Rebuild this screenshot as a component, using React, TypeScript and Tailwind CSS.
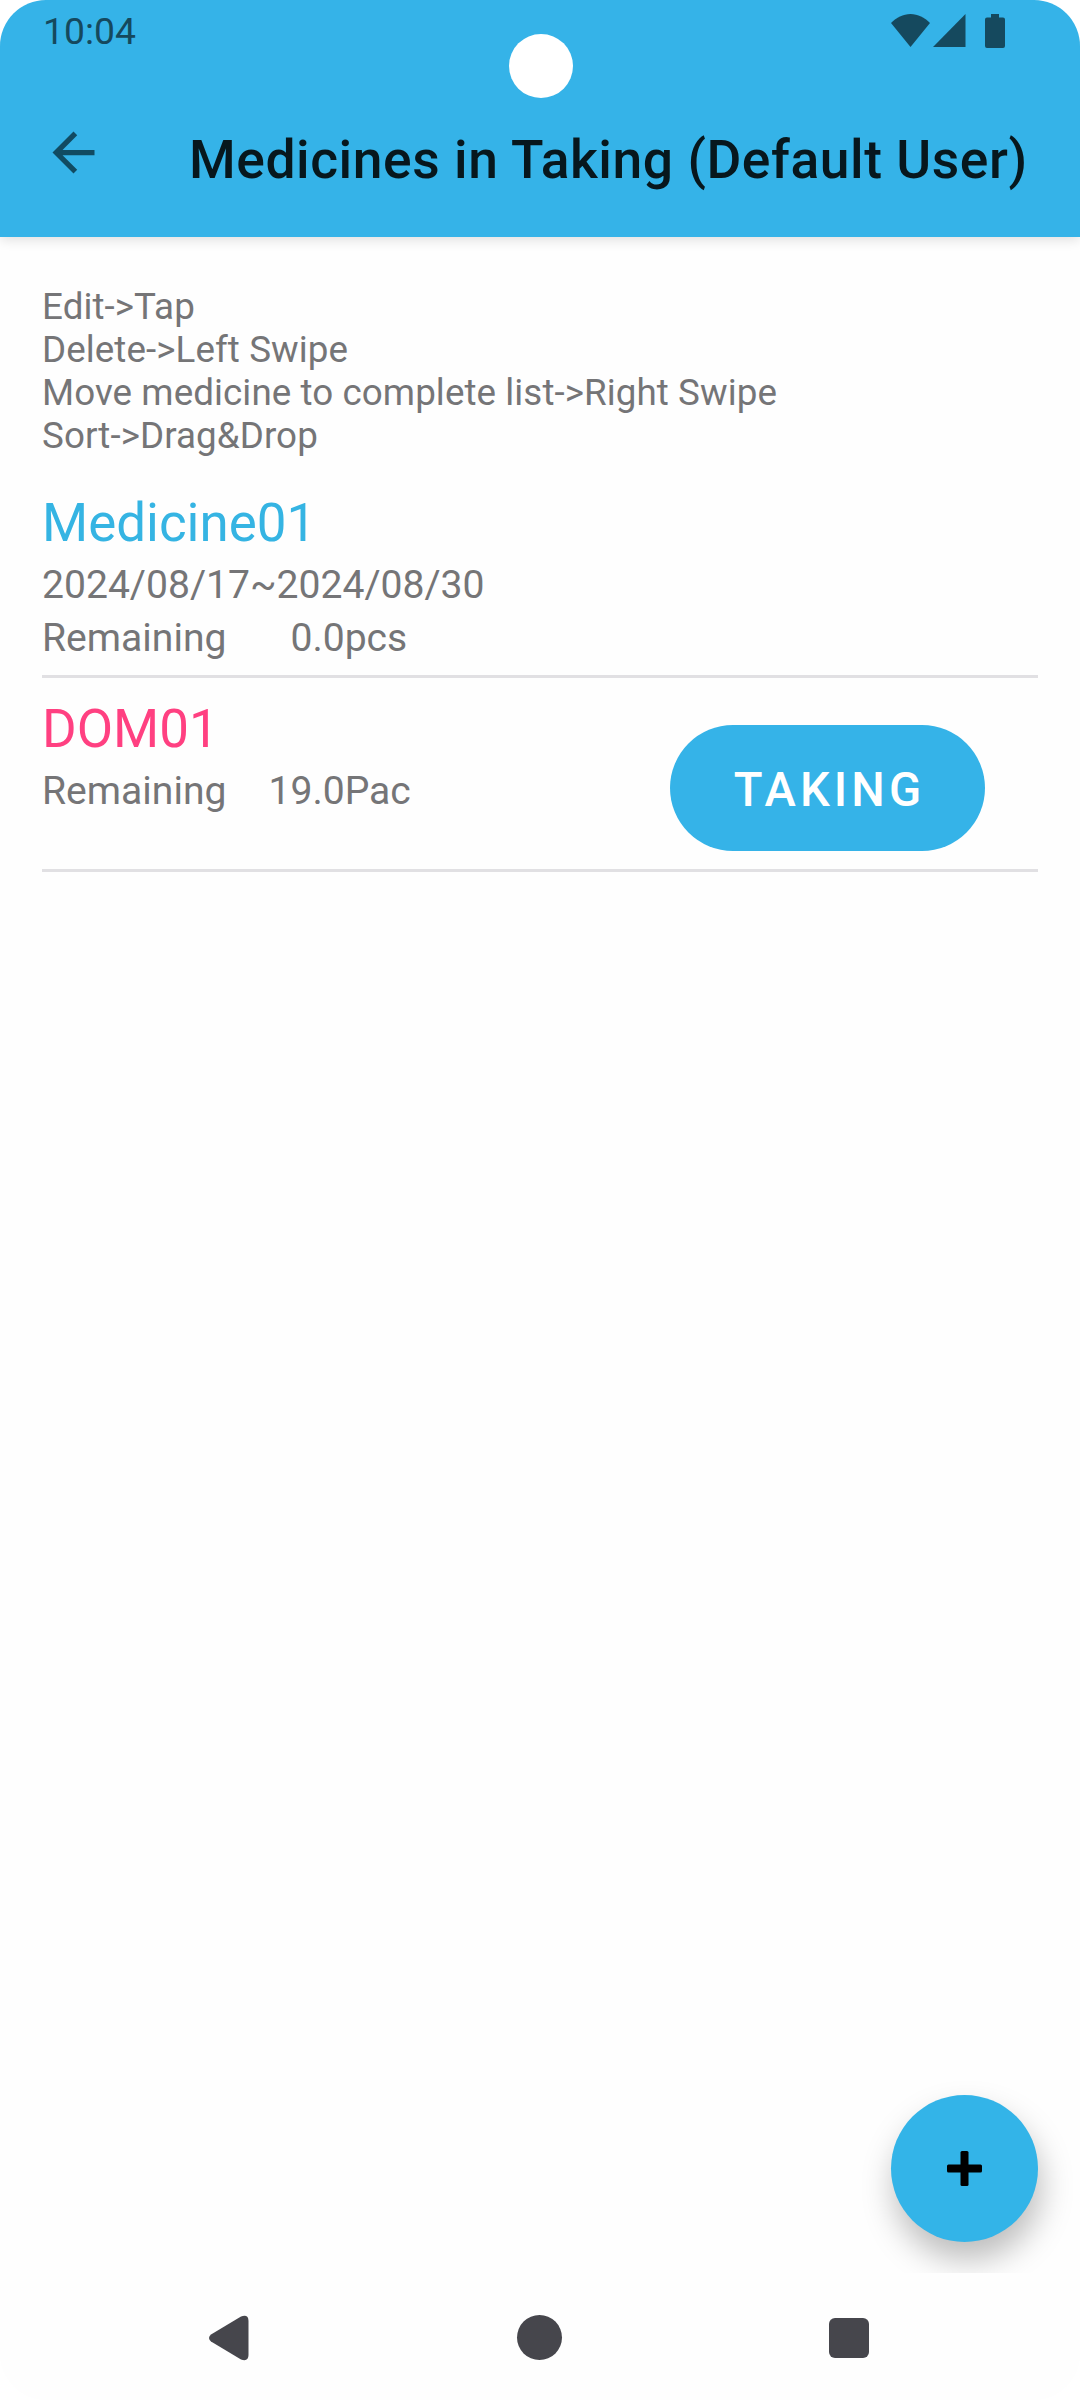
import type { ReactNode } from 'react';

type Medicine = {
  name: string;
  color: string;
  period?: string;
  amount: string;
  amountOffset: string;
  size: string;
  canTake?: boolean;
};

type MedicineRowProps = {
  medicine: Medicine;
};

type HeaderProps = {
  children: ReactNode;
};

const hints = [
  'Edit->Tap',
  'Delete->Left Swipe',
  'Move medicine to complete list->Right Swipe',
  'Sort->Drag&Drop',
];

const medicines: Medicine[] = [
  {
    name: 'Medicine01',
    color: 'text-[#35b4e3]',
    period: '2024/08/17~2024/08/30',
    amount: '0.0pcs',
    amountOffset: 'pl-[64px]',
    size: 'h-[206px]',
  },
  {
    name: 'DOM01',
    color: 'text-[#ff4081]',
    amount: '19.0Pac',
    amountOffset: 'pl-[42px]',
    size: 'h-[194px]',
    canTake: true,
  },
];

function StatusBar() {
  return (
    <div className="flex h-[63px] items-start justify-between pl-[43px] pr-[75px] text-[#15495e]">
      <span className="pt-[10px] text-[37.3px] leading-[43px]">10:04</span>
      <div className="flex pt-[14px]">
        <svg width="39" height="33" viewBox="0 0 39 33" fill="currentColor">
          <path d="M19.5 33 0 9C5.500 3.500 12 0 19.500 0S33.500 3.500 39 9Z" />
        </svg>
        <svg width="33" height="33" viewBox="0 0 33 33" fill="currentColor" className="ml-[3px]">
          <path d="M0 33H32.500V0Z" />
        </svg>
        <svg width="20" height="34" viewBox="0 0 20 34" fill="currentColor" className="ml-[19px]">
          <path d="M6 0H14V3.500H18Q20 3.500 20 5.500V32Q20 34 18 34H2Q0 34 0 32V5.500Q0 3.500 2 3.500H6Z" />
        </svg>
      </div>
    </div>
  );
}

function Header({ children }: HeaderProps) {
  return (
    <header className="relative h-[237px] shrink-0 bg-[#35b3e8] shadow-[0_2px_12px_rgba(0,0,0,0.14)]">
      <StatusBar />
      <div className="absolute left-[509px] top-[34px] size-16 rounded-full bg-white" />
      <div className="flex items-start pl-[42px] pt-[58px]">
        <button type="button" aria-label="Back" className="text-[#114b62]">
          <svg width="63" height="63" viewBox="0 0 24 24" fill="currentColor">
            <path d="M20 11H7.830l5.590-5.590L12 4l-8 8 8 8 1.410-1.410L7.830 13H20v-2z" />
          </svg>
        </button>
        <h1 className="ml-[84px] mt-[7px] whitespace-nowrap text-[53.4px] font-medium leading-[64px] tracking-[0.55px] text-[#07171d]">
          {children}
        </h1>
      </div>
    </header>
  );
}

function MedicineRow({ medicine }: MedicineRowProps) {
  return (
    <li
      className={`${medicine.size} flex items-start justify-between border-b-3 border-[#e1e0e3] pr-[53px]`}
    >
      <div className="pt-[21px] text-[39.1px] leading-[53px]">
        <h2 className={`${medicine.color} mb-[6px] text-[52.9px] leading-[60px]`}>
          {medicine.name}
        </h2>
        {medicine.period && <p>{medicine.period}</p>}
        <p className="flex">
          <span>Remaining</span>
          <span className={medicine.amountOffset}>{medicine.amount}</span>
        </p>
      </div>
      {medicine.canTake && (
        <button
          type="button"
          className="mt-[47px] h-[126px] w-[315px] rounded-full bg-[#35b3e8] pl-[4px] pt-[5px] text-[47.25px] font-medium tracking-[4.1px] text-white"
        >
          TAKING
        </button>
      )}
    </li>
  );
}

function AddButton() {
  return (
    <div className="flex h-[220px] justify-end overflow-hidden pr-[42px] pt-[42px]">
      <button
        type="button"
        aria-label="Add medicine"
        className="flex size-[147px] items-center justify-center rounded-full bg-[#33b4e8] shadow-[3px_18px_32px_rgba(0,0,0,0.26)]"
      >
        <svg width="35" height="35" viewBox="0 0 35 35">
          <rect x="13.500" y="0" width="8" height="35" rx="1.500" />
          <rect x="0" y="13.500" width="35" height="8" rx="1.500" />
        </svg>
      </button>
    </div>
  );
}

function NavigationBar() {
  return (
    <nav className="flex h-[127px] items-center pl-[208px] pt-[2px] text-[#46464c]">
      <svg width="41" height="46" viewBox="0 0 41 46" fill="currentColor">
        <path d="M33 1.500 3 19.500Q-1 23 3 26.500L33 44.500Q40.500 47 40.500 40V6Q40.500-1 33 1.500Z" />
      </svg>
      <div className="ml-[268px] size-[45px] rounded-full bg-current" />
      <div className="ml-[267px] size-10 rounded-[6px] bg-current" />
    </nav>
  );
}

export default function App() {
  return (
    <div className="h-[2400px] w-[1080px] bg-white font-[Roboto,sans-serif]">
      <div className="flex h-full flex-col overflow-hidden rounded-[46px] bg-[#fefefe]">
        <Header>Medicines in Taking (Default User)</Header>
        <main className="grow px-[42px] pt-12 text-[#757577]">
          <div className="mb-[15px] text-[36.75px] leading-[43px] tracking-[0.08px]">
            {hints.map((hint) => (
              <p key={hint}>{hint}</p>
            ))}
          </div>
          <ul>
            {medicines.map((medicine) => (
              <MedicineRow key={medicine.name} medicine={medicine} />
            ))}
          </ul>
        </main>
        <AddButton />
        <NavigationBar />
      </div>
    </div>
  );
}
